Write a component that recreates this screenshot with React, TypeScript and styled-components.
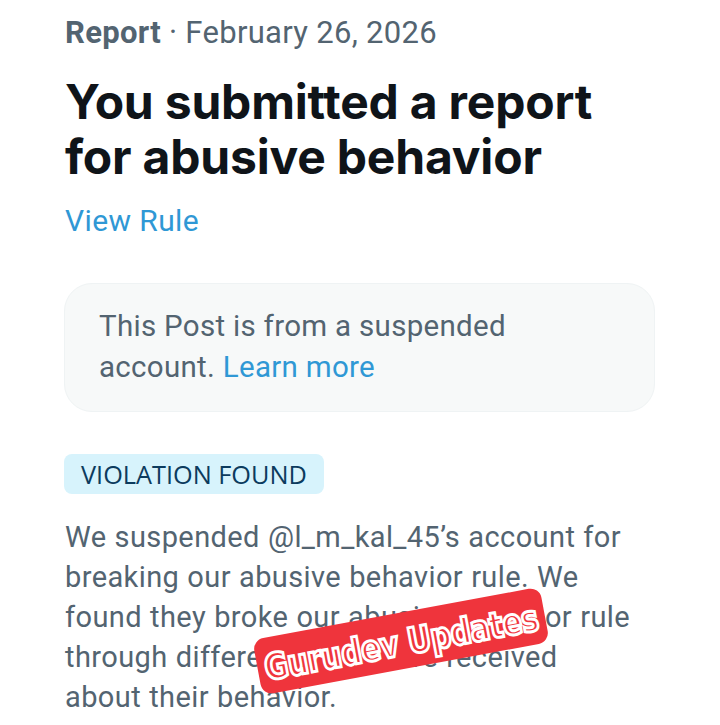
import React from "react";
import styled, { createGlobalStyle } from "styled-components";

const Global = createGlobalStyle`
  html, body { margin: 0; padding: 0; background: #ffffff; }
  body { font-family: Roboto, "Liberation Sans", sans-serif; -webkit-font-smoothing: antialiased; }
`;

const Page = styled.div`
  position: relative;
  width: 720px;
  height: 725px;
  overflow: hidden;
  background: #ffffff;
  padding: 13px 65px 0 65px;
  box-sizing: border-box;
  display: flex;
  flex-direction: column;
  align-items: flex-start;
`;

const Meta = styled.div`
  font-size: 31px;
  line-height: 40px;
  letter-spacing: 0.3px;
  color: #536471;
  white-space: nowrap;
`;

const MetaStrong = styled.span`
  font-weight: 700;
`;

const Title = styled.h1`
  margin: 21px 0 0 0;
  font-family: Inter, Roboto, sans-serif;
  font-weight: 700;
  font-size: 48px;
  line-height: 55px;
  color: #0f1419;
  letter-spacing: -0.2px;
`;

const Link = styled.a`
  color: #2f98d5;
  text-decoration: none;
`;

const RuleLink = styled(Link)`
  margin-top: 17px;
  font-size: 30px;
  line-height: 40px;
  letter-spacing: 0.4px;
`;

const Notice = styled.div`
  margin: 42px 0 0 -1px;
  width: 591px;
  box-sizing: border-box;
  padding: 22px 40px 23px 34px;
  background: #f7f9f9;
  border: 1px solid #eff3f4;
  border-radius: 28px;
  font-size: 29.5px;
  line-height: 41px;
  letter-spacing: 0.3px;
  color: #536471;
`;

const Badge = styled.div`
  margin: 42px 0 0 -1px;
  height: 40px;
  box-sizing: border-box;
  padding: 0 17px;
  display: flex;
  align-items: center;
  background: #d7f3fc;
  border-radius: 8px;
  font-family: "Open Sans", Roboto, sans-serif;
  font-size: 25.3px;
  color: #0c3b5e;
`;

const Body = styled.p`
  margin: 23px 0 0 0;
  font-size: 29px;
  line-height: 40px;
  letter-spacing: 0.4px;
  word-spacing: 0.5px;
  color: #536471;
  white-space: nowrap;
`;

const Stamp = styled.div`
  position: absolute;
  left: 255px;
  top: 613px;
  width: 292px;
  height: 56px;
  background: #ef343c;
  border-radius: 11px;
  transform: rotate(-10.5deg);
  display: flex;
  align-items: center;
  justify-content: center;
`;

const StampText = styled.span`
  font-family: "DejaVu Sans Condensed", "DejaVu Sans", sans-serif;
  font-weight: 700;
  font-size: 32px;
  color: #ef343c;
  -webkit-text-stroke: 2.6px #ffffff;
  letter-spacing: -0.3px;
  white-space: nowrap;
  margin-top: 3px;
  display: inline-block;
  transform: scaleY(1.12);
`;

export default function App() {
  return (
    <>
      <Global />
      <Page>
        <Meta>
          <MetaStrong>Report</MetaStrong> · February 26, 2026
        </Meta>
        <Title>
          You submitted a report
          <br />
          for abusive behavior
        </Title>
        <RuleLink href="#">View Rule</RuleLink>
        <Notice>
          This Post is from a suspended
          <br />
          account. <Link href="#">Learn more</Link>
        </Notice>
        <Badge>VIOLATION FOUND</Badge>
        <Body>
          We suspended @l_m_kal_45’s account for
          <br />
          breaking our abusive behavior rule. We
          <br />
          found they broke our abusive behavior rule
          <br />
          through different reports we received
          <br />
          about their behavior.
        </Body>
        <Stamp>
          <StampText>Gurudev Updates</StampText>
        </Stamp>
      </Page>
    </>
  );
}
